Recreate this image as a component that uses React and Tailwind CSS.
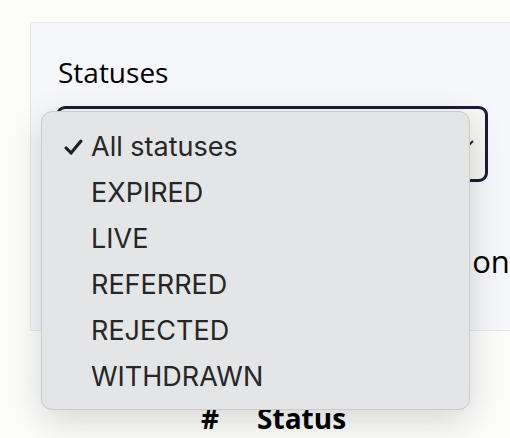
import { useState } from 'react'

const STATUSES = ['All statuses', 'EXPIRED', 'LIVE', 'REFERRED', 'REJECTED', 'WITHDRAWN']

function Check() {
  return (
    <svg width="19" height="17" viewBox="0 0 19 17" className="shrink-0">
      <path d="M2.2 9 L7 14 L16.8 2.2" fill="none" stroke="#1f1f1f" strokeWidth="3.2" strokeLinecap="round" strokeLinejoin="round" />
    </svg>
  )
}

export default function App() {
  const [selected] = useState('All statuses')

  return (
    <div className="relative h-[438px] w-[510px] overflow-hidden bg-[#fcfcfa] font-['Open_Sans',sans-serif] text-black">
      <div className="ml-[30px] mt-[22px] w-[484px] border border-[#e6e8ec] bg-[#f6f7fa] px-[25px] pb-[48px] pt-[29px]">
        <label className="block pl-[2px] text-[28px] leading-[40px]">Statuses</label>
        <div className="mt-[14px] flex h-[76px] w-[432px] items-center justify-end rounded-[9px] border-[3px] border-[#1d1b37] bg-[#f8f7f4] pr-[10px]">
          <svg width="14" height="10" viewBox="0 0 14 10">
            <path d="M2 2 L7 7 L12 2" fill="none" stroke="#222" strokeWidth="2" />
          </svg>
        </div>
        <p className="mt-[58px] whitespace-nowrap pl-[292px] text-[31px] leading-[42px]">Application</p>
      </div>

      <div className="mt-[67px] flex gap-[38px] pl-[201px] text-[28px] font-bold leading-[40px]">
        <span>#</span>
        <span>Status</span>
      </div>

      <ul className="absolute left-[41px] top-[111px] w-[429px] rounded-[11px] border border-[#c9cbcd] bg-[#e3e5e6] pb-[9px] pt-[12px] font-['Inter',sans-serif] text-[27px] text-[#262626] shadow-[0_10px_36px_rgba(0,0,0,0.16)]">
        {STATUSES.map((s) => (
          <li key={s} className="flex h-[46px] items-center">
            <span className="flex w-[49px] justify-end pr-[8px]">{s === selected && <Check />}</span>
            <span>{s}</span>
          </li>
        ))}
      </ul>
    </div>
  )
}
